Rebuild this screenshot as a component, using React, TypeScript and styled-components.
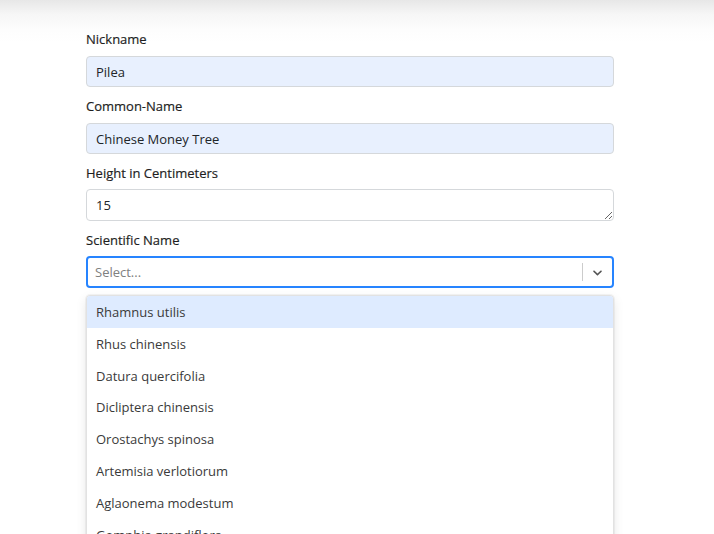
import React from "react";
import styled, { createGlobalStyle } from "styled-components";

const Global = createGlobalStyle`
  html, body { margin: 0; padding: 0; }
  body {
    font-family: "Open Sans", "Liberation Sans", sans-serif;
    background: linear-gradient(to bottom, #e7e7e7 0px, #f6f6f6 14px, #fdfdfd 30px, #ffffff 42px);
    min-height: 534px;
    overflow: hidden;
  }
`;

const Page = styled.div`
  padding: 29px 0 0 86px;
  width: 528px;
`;

const Group = styled.div`
  display: flex;
  flex-direction: column;
  margin-bottom: 9px;
`;

const Label = styled.label<{ $tight?: boolean }>`
  font-size: 13px;
  line-height: 20px;
  font-weight: 400;
  color: #1e1e1e;
  -webkit-text-stroke: 0.18px #1e1e1e;
  margin-bottom: ${(p) => (p.$tight ? "6px" : "7px")};
`;

const Input = styled.input<{ $filled?: boolean }>`
  box-sizing: border-box;
  height: 31px;
  width: 100%;
  padding: 0 9px;
  font-family: inherit;
  font-size: 13px;
  color: #212529;
  background: ${(p) => (p.$filled ? "#e8f0fe" : "#fff")};
  border: 1px solid #d5d8db;
  border-radius: 4px;
  outline: none;
`;

const TextArea = styled.textarea`
  box-sizing: border-box;
  height: 32px;
  width: 100%;
  padding: 6px 9px;
  font-family: inherit;
  font-size: 13px;
  line-height: 18px;
  color: #212529;
  background: #fff;
  border: 1px solid #d5d8db;
  border-radius: 4px;
  outline: none;
  display: block;
`;

const SelectControl = styled.div`
  box-sizing: border-box;
  height: 32px;
  display: flex;
  align-items: center;
  border: 2px solid #2684ff;
  border-radius: 4px;
  background: #fff;
`;

const Placeholder = styled.div`
  flex: 1;
  padding-left: 7px;
  font-size: 13px;
  color: #808080;
`;

const Separator = styled.span`
  width: 1px;
  height: 18px;
  background: #cccccc;
`;

const Indicator = styled.div`
  width: 29px;
  display: flex;
  align-items: center;
  justify-content: center;
  color: #555;
`;

const Menu = styled.div`
  margin-top: 7px;
  border: 1px solid #e2e2e2;
  border-radius: 4px;
  background: #fff;
  box-shadow: 0 0 0 1px rgba(0, 0, 0, 0.04), 0 4px 11px rgba(0, 0, 0, 0.1);
  overflow: hidden;
`;

const Option = styled.div<{ $active?: boolean }>`
  height: 31.85px;
  display: flex;
  align-items: center;
  padding-left: 9px;
  font-size: 13px;
  color: #3a3a3a;
  background: ${(p) => (p.$active ? "#deebff" : "transparent")};
`;

const options = [
  "Rhamnus utilis",
  "Rhus chinensis",
  "Datura quercifolia",
  "Dicliptera chinensis",
  "Orostachys spinosa",
  "Artemisia verlotiorum",
  "Aglaonema modestum",
  "Gomphia grandiflora",
  "Ficus elastica",
];

export default function App() {
  return (
    <>
      <Global />
      <Page>
        <Group>
          <Label>Nickname</Label>
          <Input $filled defaultValue="Pilea" />
        </Group>
        <Group>
          <Label>Common-Name</Label>
          <Input $filled defaultValue="Chinese Money Tree" />
        </Group>
        <Group>
          <Label $tight>Height in Centimeters</Label>
          <TextArea defaultValue="15" />
        </Group>
        <Group>
          <Label $tight>Scientific Name</Label>
          <SelectControl>
            <Placeholder>Select...</Placeholder>
            <Separator />
            <Indicator>
              <svg width="15" height="15" viewBox="0 0 20 20" fill="currentColor">
                <path d="M4.516 7.548c0.436-0.446 1.043-0.481 1.576 0l3.908 3.747 3.908-3.747c0.533-0.481 1.141-0.446 1.574 0 0.436 0.445 0.408 1.197 0 1.615-0.406 0.418-4.695 4.502-4.695 4.502-0.217 0.223-0.502 0.335-0.787 0.335s-0.57-0.112-0.789-0.335c0 0-4.287-4.084-4.695-4.502s-0.436-1.170 0-1.615z" />
              </svg>
            </Indicator>
          </SelectControl>
          <Menu>
            {options.map((o, i) => (
              <Option key={o} $active={i === 0}>
                {o}
              </Option>
            ))}
          </Menu>
        </Group>
      </Page>
    </>
  );
}
